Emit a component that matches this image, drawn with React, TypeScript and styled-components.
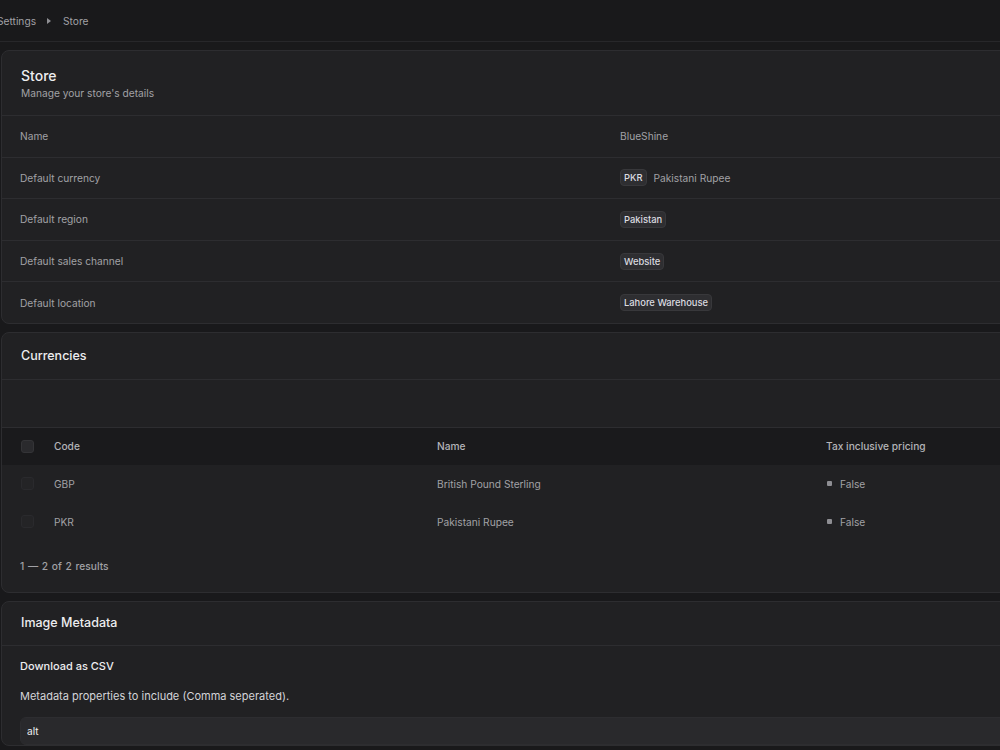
import styled, { createGlobalStyle } from "styled-components";

const GlobalStyle = createGlobalStyle`
  html, body {
    margin: 0;
    padding: 0;
    background: #19191b;
    overflow: hidden;
  }
  body {
    font-family: Inter, "Noto Sans", sans-serif;
    color: #ededef;
    -webkit-font-smoothing: antialiased;
  }
`;

const Page = styled.div`
  width: 1000px;
  height: 750px;
  overflow: hidden;
  background: #19191b;
`;

const Inner = styled.div`
  width: 1210px;
  display: flex;
  flex-direction: column;
`;

const TopBar = styled.div`
  height: 41px;
  display: flex;
  align-items: center;
  gap: 9px;
  margin-left: -3px;
  border-bottom: 1px solid #27272a;
  font-size: 10.2px;
  color: #a1a1a6;
`;

const Crumb = styled.span`
  color: #a1a1a6;
`;

const CrumbArrow = styled.span`
  width: 0;
  height: 0;
  border-top: 3.5px solid transparent;
  border-bottom: 3.5px solid transparent;
  border-left: 4.5px solid #8e8e93;
  margin: 0 3px 0 2px;
`;

const Content = styled.div`
  display: flex;
  flex-direction: column;
  gap: 8px;
  padding: 8px 0 0 1px;
`;

const Card = styled.section`
  background: #212123;
  border: 1px solid #2d2d30;
  border-radius: 8px;
  overflow: hidden;
`;

const CardHeader = styled.div<{ $height: number }>`
  height: ${({ $height }) => $height}px;
  box-sizing: border-box;
  padding: 0 19px;
  display: flex;
  flex-direction: column;
  justify-content: center;
  gap: 1px;
`;

const CardTitle = styled.h1<{ $small?: boolean }>`
  margin: 0;
  font-size: ${({ $small }) => ($small ? "12.5px" : "14px")};
  line-height: 18px;
  font-weight: 500;
  color: #ededef;
`;

const CardSubtitle = styled.p`
  margin: 0;
  font-size: 10.2px;
  line-height: 14px;
  color: #a1a1a6;
`;

const InfoRow = styled.div`
  display: grid;
  grid-template-columns: 600px 1fr;
  align-items: center;
  height: 41.6px;
  box-sizing: border-box;
  padding-left: 18px;
  border-top: 1px solid #2d2d30;
  font-size: 10.2px;
  color: #a1a1a6;
`;

const ValueCell = styled.div`
  display: flex;
  align-items: center;
  gap: 7px;
  color: #a1a1a6;
`;

const Badge = styled.span`
  display: inline-flex;
  align-items: center;
  height: 15px;
  padding: 0 3px;
  border-radius: 4px;
  background: #2e2e31;
  border: 1px solid #38383b;
  font-size: 9.4px;
  font-weight: 500;
  color: #dcdce0;
`;

const Toolbar = styled.div`
  height: 49px;
  box-sizing: border-box;
  border-top: 1px solid #2d2d30;
  border-bottom: 1px solid #2d2d30;
`;

const Table = styled.div`
  display: flex;
  flex-direction: column;
`;

const TableRow = styled.div<{ $head?: boolean }>`
  display: grid;
  grid-template-columns: 52px 383px 389px 1fr;
  align-items: center;
  height: ${({ $head }) => ($head ? "37px" : "38px")};
  background: ${({ $head }) => ($head ? "#1a1a1c" : "transparent")};
  font-size: 10.2px;
  color: #a1a1a6;
`;

const CheckCell = styled.div`
  padding-left: 19px;
  display: flex;
  align-items: center;
`;

const Checkbox = styled.span<{ $muted?: boolean }>`
  width: 13px;
  height: 13px;
  border-radius: 3px;
  background: ${({ $muted }) => ($muted ? "#242426" : "#2a2a2d")};
  border: 1px solid ${({ $muted }) => ($muted ? "#2a2a2d" : "#343437")};
  box-sizing: border-box;
`;

const HeadCell = styled.div`
  color: #b4b4b8;
  font-weight: 500;
`;

const Cell = styled.div`
  color: #a1a1a6;
  display: flex;
  align-items: center;
  gap: 8px;
`;

const StatusDot = styled.span`
  width: 5px;
  height: 5px;
  border-radius: 1px;
  background: #8e8e93;
  margin-left: 1px;
`;

const Pagination = styled.div`
  height: 51px;
  padding: 0 18px;
  display: flex;
  align-items: center;
  font-size: 10.2px;
  font-weight: 500;
  color: #a1a1a6;
  word-spacing: 1px;
`;

const Divider = styled.div`
  border-top: 1px solid #2d2d30;
`;

const FormBody = styled.div`
  padding: 13px 18px 0;
  display: flex;
  flex-direction: column;
`;

const FormTitle = styled.h3`
  margin: 0;
  font-size: 11px;
  line-height: 14px;
  font-weight: 500;
  color: #ededef;
`;

const FormLabel = styled.label`
  margin-top: 16px;
  font-size: 11px;
  line-height: 14px;
  color: #d4d4d8;
`;

const TextInput = styled.input`
  margin-top: 14px;
  height: 28px;
  box-sizing: border-box;
  border-radius: 6px;
  border: 1px solid #2d2d30;
  background: #29292c;
  color: #ededef;
  font-family: Inter, "Noto Sans", sans-serif;
  font-size: 10.2px;
  padding: 0 6px;
  outline: none;
`;

const storeRows = [
  { label: "Name", value: "BlueShine", kind: "text" },
  { label: "Default currency", value: "Pakistani Rupee", code: "PKR", kind: "currency" },
  { label: "Default region", value: "Pakistan", kind: "badge" },
  { label: "Default sales channel", value: "Website", kind: "badge" },
  { label: "Default location", value: "Lahore Warehouse", kind: "badge" },
];

const currencies = [
  { code: "GBP", name: "British Pound Sterling", tax: "False" },
  { code: "PKR", name: "Pakistani Rupee", tax: "False" },
];

const App = () => {
  return (
    <Page>
      <GlobalStyle />
      <Inner>
        <TopBar>
          <Crumb>Settings</Crumb>
          <CrumbArrow />
          <Crumb>Store</Crumb>
        </TopBar>
        <Content>
          <Card>
            <CardHeader $height={64}>
              <CardTitle>Store</CardTitle>
              <CardSubtitle>Manage your store's details</CardSubtitle>
            </CardHeader>
            {storeRows.map((row) => (
              <InfoRow key={row.label}>
                <span>{row.label}</span>
                <ValueCell>
                  {row.kind === "text" && row.value}
                  {row.kind === "currency" && (
                    <>
                      <Badge>{row.code}</Badge>
                      {row.value}
                    </>
                  )}
                  {row.kind === "badge" && <Badge>{row.value}</Badge>}
                </ValueCell>
              </InfoRow>
            ))}
          </Card>

          <Card>
            <CardHeader $height={46}>
              <CardTitle $small>Currencies</CardTitle>
            </CardHeader>
            <Toolbar />
            <Table>
              <TableRow $head>
                <CheckCell>
                  <Checkbox />
                </CheckCell>
                <HeadCell>Code</HeadCell>
                <HeadCell>Name</HeadCell>
                <HeadCell>Tax inclusive pricing</HeadCell>
              </TableRow>
              {currencies.map((c) => (
                <TableRow key={c.code}>
                  <CheckCell>
                    <Checkbox $muted />
                  </CheckCell>
                  <Cell>{c.code}</Cell>
                  <Cell>{c.name}</Cell>
                  <Cell>
                    <StatusDot />
                    {c.tax}
                  </Cell>
                </TableRow>
              ))}
            </Table>
            <Pagination>1 — 2 of 2 results</Pagination>
          </Card>

          <Card>
            <CardHeader $height={43}>
              <CardTitle $small>Image Metadata</CardTitle>
            </CardHeader>
            <Divider />
            <FormBody>
              <FormTitle>Download as CSV</FormTitle>
              <FormLabel>Metadata properties to include (Comma seperated).</FormLabel>
              <TextInput defaultValue="alt" />
            </FormBody>
          </Card>
        </Content>
      </Inner>
    </Page>
  );
};

export default App;
